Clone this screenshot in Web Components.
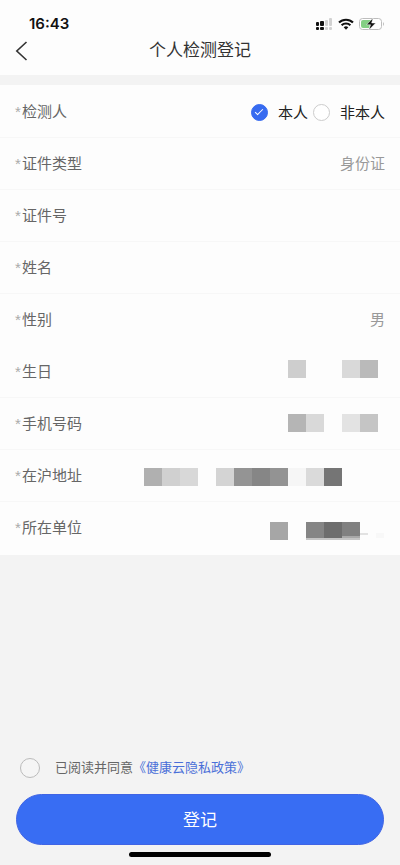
<!DOCTYPE html>
<html lang="zh-CN">
<head>
<meta charset="utf-8">
<meta name="viewport" content="width=device-width, initial-scale=1">
<title>个人检测登记</title>
<style>
    body {
        margin: 0;
        font-family: "Liberation Sans", "Noto Sans CJK SC", sans-serif;
        background-color: #f3f3f3;
    }
</style>
</head>
<body>
<register-page></register-page>

<script>
const define = (name, html, setup) => {
    const template = document.createElement('template');
    template.innerHTML = html;

    window.customElements.define(name, class extends HTMLElement {
        constructor() {
            super();
            this._shadowRoot = this.attachShadow({ mode: 'open' });
            this._shadowRoot.appendChild(template.content.cloneNode(true));
        }

        connectedCallback() {
            if (setup) {
                setup(this, this._shadowRoot);
            }
        }
    });
};

define('status-bar', `
    <style>
        :host {
            display: flex;
            align-items: center;
            justify-content: space-between;
            height: 24px;
            padding: 12px 15px 0 29px;
            color: #111;
        }

        time {
            font: 600 15px/24px Inter, sans-serif;
        }

        .icons {
            display: flex;
            align-items: center;
            gap: 5px;
        }

        svg {
            display: block;
        }
    </style>
    <time>16:43</time>
    <div class="icons">
        <svg width="17" height="13" viewBox="0 0 17 13" aria-hidden="true">
            <g fill="#111">
                <rect x="0" y="4" width="3" height="4" rx="1"/>
                <rect x="4" y="3" width="4" height="5" rx="1"/>
                <rect x="0" y="9" width="3" height="3" rx="1"/>
                <rect x="4" y="9" width="4" height="3" rx="1"/>
            </g>
            <g fill="#d2d2d2">
                <rect x="9" y="2" width="3" height="6" rx="1"/>
                <rect x="13" y="0" width="3" height="8" rx="1"/>
                <rect x="9" y="9" width="3" height="3" rx="1"/>
                <rect x="13" y="9" width="3" height="3" rx="1"/>
            </g>
        </svg>
        <svg width="16" height="12" viewBox="0 0 16 12" aria-hidden="true">
            <g fill="none" stroke="#111" stroke-width="2.1">
                <path d="M1 4.6a10 10 0 0 1 14 0"/>
                <path d="M3.6 7.3a6.3 6.3 0 0 1 8.8 0"/>
            </g>
            <path d="M5.7 9.3a3.4 3.4 0 0 1 4.6 0L8 11.7z" fill="#111"/>
        </svg>
        <svg width="26" height="14" viewBox="0 0 26 14" aria-hidden="true">
            <rect x=".5" y="1.5" width="22" height="11" rx="3" fill="#fff" stroke="#bdbdbd"/>
            <path d="M4 3h8.500l-2.500 8H4a2 2 0 0 1-2-2V5a2 2 0 0 1 2-2z" fill="#83cf83"/>
            <path d="M24 5q2 2 0 4z" fill="#bdbdbd"/>
            <path d="M14 1L7.500 7.800h4L9.800 13l6.900-7h-4z" fill="#111" stroke="#fff" stroke-width=".5"/>
        </svg>
    </div>
`);

define('nav-header', `
    <style>
        :host {
            display: grid;
            grid-template-columns: 44px 1fr 44px;
            align-items: center;
            height: 30px;
            padding-bottom: 9px;
        }

        button {
            display: flex;
            padding: 4px 15px;
            border: 0;
            background: none;
        }

        h1 {
            margin: 0;
            text-align: center;
            color: #333;
            font-size: 17px;
            font-weight: normal;
            line-height: 30px;
        }
    </style>
    <button type="button" aria-label="返回">
        <svg width="13" height="20" viewBox="0 0 13 20" fill="none" stroke="#333" stroke-width="1.6">
            <path d="M11.500 1L1.800 10l9.700 9"/>
        </svg>
    </button>
    <h1><slot></slot></h1>
`);

define('form-row', `
    <style>
        :host {
            display: flex;
            align-items: center;
            box-sizing: border-box;
            height: 52px;
            padding: 0 15px;
            border-bottom: 1px solid #f7f7f7;
            font-size: 15px;
            line-height: 24px;
        }

        :host([plain]) {
            border-bottom-color: transparent;
        }

        label {
            flex: none;
            color: #666;
        }

        .mark {
            display: inline-block;
            width: 7px;
            color: #aaa;
        }

        input {
            flex: 1;
            min-width: 0;
            padding: 0;
            border: 0;
            outline: 0;
            background: none;
            color: #999;
            font: inherit;
            text-align: right;
        }
    </style>
    <label for="field"><span class="mark">*</span><span class="text"></span></label>
    <input id="field" type="text">
`, (host, root) => {
    root.querySelector('.text').textContent = host.getAttribute('label');
    root.querySelector('input').value = host.getAttribute('value') || '';
});

define('person-choice', `
    <style>
        :host {
            display: block;
            border-bottom: 1px solid #f7f7f7;
            font-size: 15px;
            line-height: 24px;
        }

        .group {
            display: flex;
            align-items: center;
            justify-content: space-between;
            height: 51px;
            padding: 0 15px;
        }

        .title {
            color: #666;
        }

        .mark {
            display: inline-block;
            width: 7px;
            color: #aaa;
        }

        .options {
            display: flex;
            gap: 5px;
            padding-top: 2px;
        }

        label {
            display: flex;
            align-items: center;
            gap: 10px;
            color: #222;
        }

        input {
            display: flex;
            align-items: center;
            justify-content: center;
            box-sizing: border-box;
            appearance: none;
            width: 17px;
            height: 17px;
            margin: 0;
            border: 1px solid #ccc;
            border-radius: 50%;
            background-color: #fff;
        }

        input:checked {
            border-color: #376bf0;
            background-color: #376bf0;
        }

        input:checked::after {
            content: '';
            width: 7px;
            height: 3px;
            margin-bottom: 3px;
            border: solid #fff;
            border-width: 0 0 1px 1px;
            transform: rotate(-45deg);
        }
    </style>
    <div class="group" role="radiogroup" aria-labelledby="title">
        <span class="title" id="title"><span class="mark">*</span>检测人</span>
        <div class="options">
            <label><input type="radio" name="person" checked>本人</label>
            <label><input type="radio" name="person">非本人</label>
        </div>
    </div>
`);

// Mosaic that hides the private values, in 18px cells: [column, row offset, colour]
const CELLS = [
    [8, 0, '#cecece'], [11, 0, '#d9d9d9'], [12, 0, '#bababa'],
    [8, 54, '#b5b5b5'], [9, 54, '#d9d9d9'], [11, 54, '#e3e3e3'], [12, 54, '#c5c5c5'],
    [0, 108, '#b0b0b0'], [1, 108, '#d0d0d0'], [2, 108, '#d8d8d8'], [4, 108, '#d4d4d4'],
    [5, 108, '#949494'], [6, 108, '#868686'], [7, 108, '#939393'], [8, 108, '#f6f6f6'],
    [9, 108, '#dadada'], [10, 108, '#757575'],
    [7, 162, '#a6a6a6'], [9, 162, '#858585'], [10, 162, '#6d6d6d'], [11, 162, '#808080']
];

define('privacy-mosaic', `
    <style>
        :host {
            display: block;
            pointer-events: none;
        }

        svg {
            display: block;
        }
    </style>
    <svg width="241" height="180" shape-rendering="crispEdges" aria-hidden="true"></svg>
`, (host, root) => {
    root.querySelector('svg').innerHTML = CELLS.map(([column, y, fill]) =>
        `<rect x="${column * 18}" y="${y}" width="18" height="18" fill="${fill}"/>`
    ).join('') + `
        <rect x="162" y="178" width="54" height="2" fill="#c4c4c4"/>
        <rect x="198" y="176" width="18" height="2" fill="#a8a8a8"/>
        <rect x="216" y="173" width="8" height="2" fill="#e2e2e2"/>
        <rect x="232" y="173" width="8" height="5" fill="#f8f8f8"/>`;
});

define('agree-line', `
    <style>
        :host {
            display: flex;
            align-items: center;
            gap: 15px;
            padding: 0 20px;
            color: #666;
            font-size: 13px;
            line-height: 22px;
        }

        input {
            box-sizing: border-box;
            appearance: none;
            flex: none;
            width: 20px;
            height: 20px;
            margin: 0;
            border: 1px solid #bbb;
            border-radius: 50%;
            background-color: #f5f5f5;
        }

        input:checked {
            background-color: #376bf0;
        }

        a {
            color: #4a6fd8;
            text-decoration: none;
        }
    </style>
    <input type="checkbox" id="agree">
    <span><label for="agree">已阅读并同意</label><a href="#policy">《健康云隐私政策》</a></span>
`);

define('submit-button', `
    <style>
        :host {
            display: block;
            padding: 15px 16px 0;
        }

        button {
            display: block;
            width: 100%;
            height: 51px;
            padding: 0 0 2px;
            border: 1px solid #4064e4;
            border-radius: 26px;
            background-color: #386df3;
            color: #fff;
            font-family: inherit;
            font-size: 17px;
        }
    </style>
    <button type="submit"><slot></slot></button>
`);

define('register-page', `
    <style>
        :host {
            display: flex;
            flex-direction: column;
            min-height: 100vh;
        }

        header {
            background-color: #fdfdfd;
        }

        .card {
            position: relative;
            margin-top: 10px;
            padding: 1px 0;
            background-color: #fdfdfd;
        }

        privacy-mosaic {
            position: absolute;
            top: 275px;
            right: 15px;
        }

        footer {
            margin-top: auto;
            padding-top: 20px;
        }

        .home {
            width: 142px;
            height: 5px;
            margin: 7px auto 8px;
            border-radius: 3px;
            background-color: #000;
        }
    </style>
    <header>
        <status-bar></status-bar>
        <nav-header>个人检测登记</nav-header>
    </header>
    <main class="card">
        <person-choice></person-choice>
        <form-row label="证件类型" value="身份证"></form-row>
        <form-row label="证件号"></form-row>
        <form-row label="姓名"></form-row>
        <form-row label="性别" value="男" plain></form-row>
        <form-row label="生日"></form-row>
        <form-row label="手机号码"></form-row>
        <form-row label="在沪地址"></form-row>
        <form-row label="所在单位" plain></form-row>
        <privacy-mosaic></privacy-mosaic>
    </main>
    <footer>
        <agree-line></agree-line>
        <submit-button>登记</submit-button>
        <div class="home"></div>
    </footer>
`);
</script>
</body>
</html>
